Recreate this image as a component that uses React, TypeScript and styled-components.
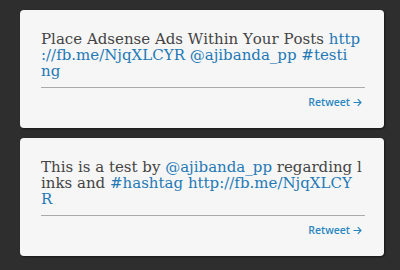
import React from "react";
import styled, { createGlobalStyle } from "styled-components";

const GlobalStyle = createGlobalStyle`
  html, body {
    margin: 0;
    padding: 0;
    background: #2e2e2e;
  }
`;

const Page = styled.div`
  width: 400px;
  height: 270px;
  box-sizing: border-box;
  padding: 10px 16px 0 20px;
  display: flex;
  flex-direction: column;
  gap: 10px;
  background: #2e2e2e;
`;

const Card = styled.div`
  height: 118px;
  box-sizing: border-box;
  padding: 21px 19px 0 21px;
  background: #f6f6f6;
  border-radius: 4px;
  box-shadow: 1px 1px 2px rgba(0, 0, 0, 0.5);
  display: flex;
  flex-direction: column;
`;

const TweetText = styled.p`
  margin: 0;
  height: 48px;
  font-family: "DejaVu Serif", serif;
  font-size: 15px;
  line-height: 16px;
  color: #444;
  white-space: nowrap;
  font-kerning: none;
`;

const Link = styled.a`
  color: #2479b5;
  text-decoration: none;
`;

const Divider = styled.hr`
  margin: 8px 0 0 0;
  border: none;
  border-top: 1px solid #aaaaaa;
`;

const Actions = styled.div`
  margin-top: 7px;
  display: flex;
  justify-content: flex-end;
  padding-right: 3px;
`;

const Retweet = styled.a`
  display: flex;
  align-items: center;
  gap: 3px;
  font-family: "Open Sans", sans-serif;
  font-size: 10.5px;
  line-height: 14px;
  font-weight: 600;
  color: #2a86c0;
  text-decoration: none;
`;

type Part = { t: string; link?: boolean };

// each tweet is given line by line, as the original wraps mid-word
const tweets: Part[][][] = [
  [
    [{ t: "Place Adsense Ads Within Your Posts " }, { t: "http", link: true }],
    [
      { t: "://fb.me/NjqXLCYR", link: true },
      { t: " " },
      { t: "@ajibanda_pp", link: true },
      { t: " " },
      { t: "#testi", link: true },
    ],
    [{ t: "ng", link: true }],
  ],
  [
    [
      { t: "This is a test by " },
      { t: "@ajibanda_pp", link: true },
      { t: " regarding l" },
    ],
    [
      { t: "inks and " },
      { t: "#hashtag", link: true },
      { t: " " },
      { t: "http://fb.me/NjqXLCY", link: true },
    ],
    [{ t: "R", link: true }],
  ],
];

const Arrow = () => (
  <svg width="9" height="9" viewBox="0 0 9 9" fill="none">
    <path
      d="M0.5 4.5H8M4.8 1.2L8 4.5L4.8 7.8"
      stroke="#2a86c0"
      strokeWidth="1.2"
    />
  </svg>
);

export default function App() {
  return (
    <>
      <GlobalStyle />
      <Page>
        {tweets.map((lines, i) => (
          <Card key={i}>
            <TweetText>
              {lines.map((parts, l) => (
                <React.Fragment key={l}>
                  {l > 0 && <br />}
                  {parts.map((p, j) =>
                    p.link ? (
                      <Link key={j}>{p.t}</Link>
                    ) : (
                      <span key={j}>{p.t}</span>
                    )
                  )}
                </React.Fragment>
              ))}
            </TweetText>
            <Divider />
            <Actions>
              <Retweet>
                Retweet <Arrow />
              </Retweet>
            </Actions>
          </Card>
        ))}
      </Page>
    </>
  );
}
